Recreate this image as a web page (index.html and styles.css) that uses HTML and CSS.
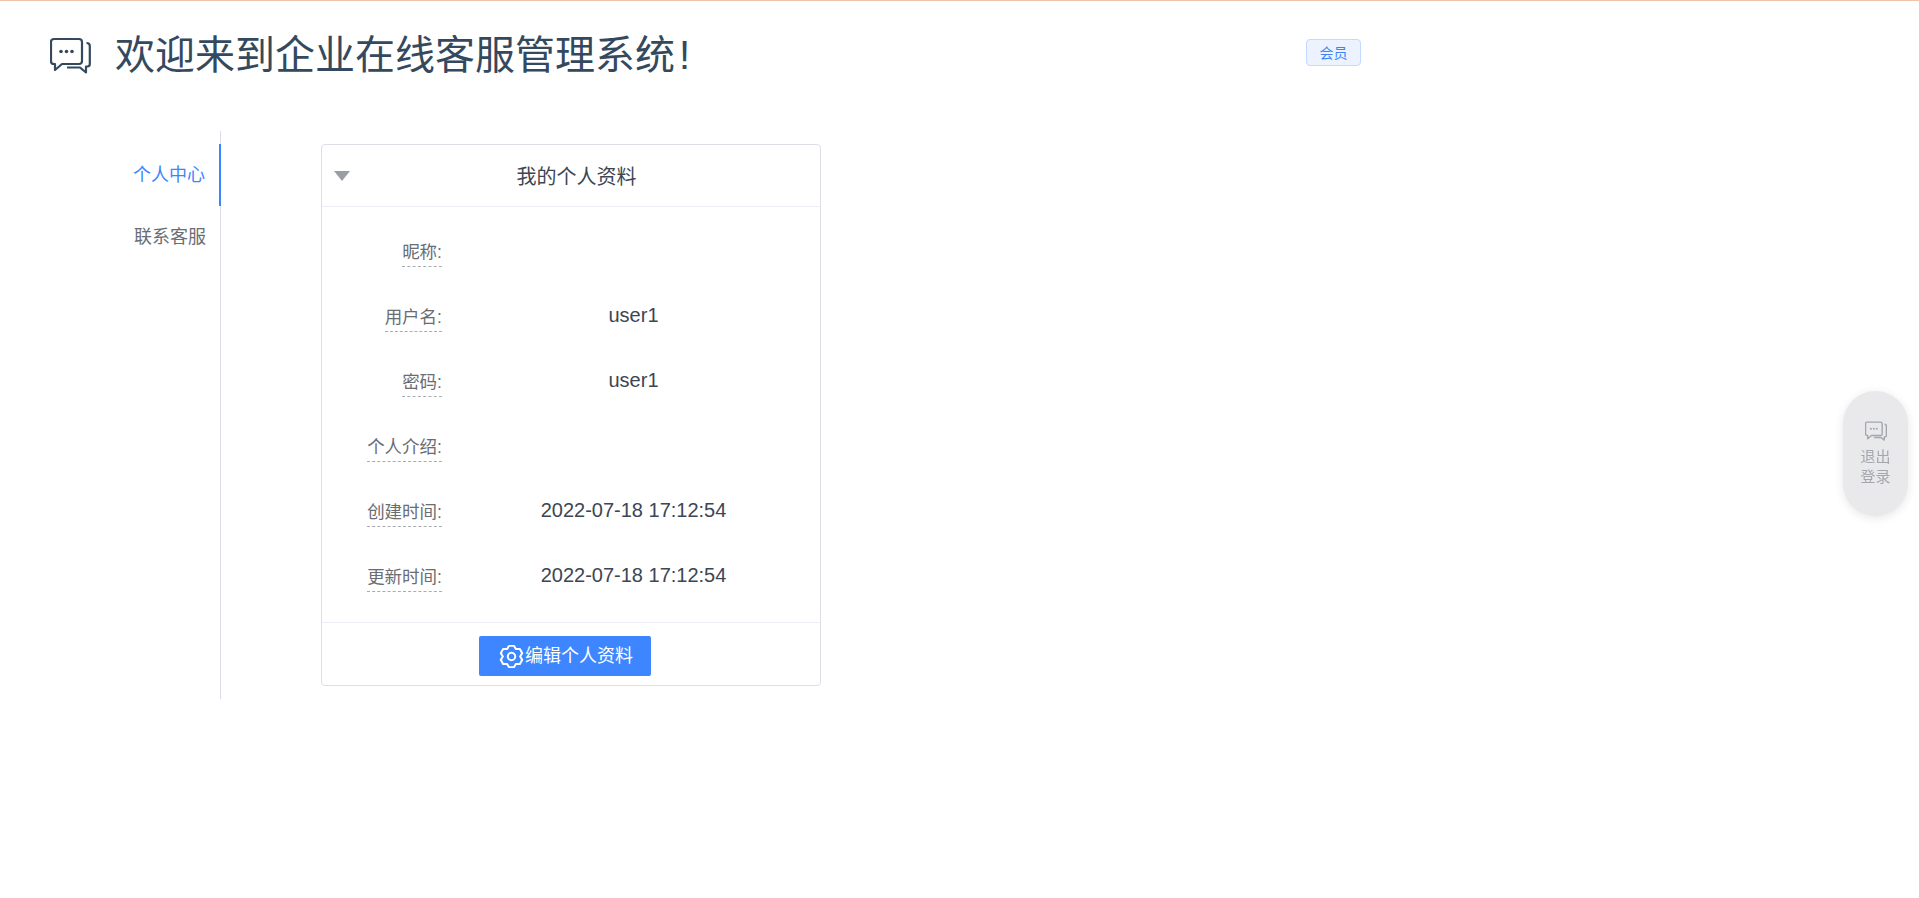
FILE: index.html
```html
<!DOCTYPE html>
<html lang="zh-CN">
<head>
<meta charset="utf-8">
<title>企业在线客服管理系统</title>
<link rel="stylesheet" href="styles.css">
</head>
<body>
<header class="top">
  <svg class="logo" viewBox="0 0 41 37" fill="none" stroke="currentColor" stroke-width="2.2" stroke-linejoin="round">
    <path d="M4 2H29a3 3 0 0 1 3 3V24a3 3 0 0 1-3 3H12L5 33V27H4a3 3 0 0 1-3-3V5a3 3 0 0 1 3-3z"/>
    <path d="M36.500 6c2 0 3.300 1 3.300 3V27a2.500 2.500 0 0 1-2.500 2.500H36V35.500L30 30.500H17"/>
    <circle cx="11" cy="14.500" r="1.800" fill="currentColor" stroke="none"/>
    <circle cx="16.500" cy="14.500" r="1.800" fill="currentColor" stroke="none"/>
    <circle cx="22" cy="14.500" r="1.800" fill="currentColor" stroke="none"/>
  </svg>
  <h1 class="title">欢迎来到企业在线客服管理系统<span class="bang">!</span></h1>
  <span class="badge">会员</span>
</header>
<main class="main">
  <nav class="tabs">
    <a class="tab active">个人中心</a>
    <a class="tab">联系客服</a>
  </nav>
  <section class="card">
    <div class="card-head">
      <span class="caret"></span>
      <span class="card-title">我的个人资料</span>
    </div>
    <div class="card-body">
      <div class="row"><span class="label"><span class="label-text">昵称:</span></span><span class="value"></span></div>
      <div class="row"><span class="label"><span class="label-text">用户名:</span></span><span class="value">user1</span></div>
      <div class="row"><span class="label"><span class="label-text">密码:</span></span><span class="value">user1</span></div>
      <div class="row"><span class="label"><span class="label-text">个人介绍:</span></span><span class="value"></span></div>
      <div class="row"><span class="label"><span class="label-text">创建时间:</span></span><span class="value">2022-07-18 17:12:54</span></div>
      <div class="row"><span class="label"><span class="label-text">更新时间:</span></span><span class="value">2022-07-18 17:12:54</span></div>
    </div>
    <div class="card-foot">
      <button class="btn" type="button">
        <svg class="gear" viewBox="0 0 24 24" fill="none" stroke="currentColor" stroke-width="1.900" stroke-linejoin="round">
          <path d="M9.530 1.800L14.470 1.800L16.150 4.810L20.040 4.700L22.300 8.780L20.300 12L22.300 15.220L20.040 19.300L16.150 19.190L14.470 22.200L9.530 22.200L7.850 19.190L3.960 19.300L1.700 15.220L3.700 12L1.700 8.780L3.960 4.700L7.850 4.810Z"/>
          <circle cx="12" cy="12" r="3.600"/>
        </svg><span class="btn-text">编辑个人资料</span>
      </button>
    </div>
  </section>
</main>
<aside class="float">
  <svg class="float-icon" viewBox="0 0 41 37" fill="none" stroke="currentColor" stroke-width="2.600" stroke-linejoin="round">
    <path d="M4 2H29a3 3 0 0 1 3 3V24a3 3 0 0 1-3 3H12L5 33V27H4a3 3 0 0 1-3-3V5a3 3 0 0 1 3-3z"/>
    <path d="M36.500 6c2 0 3.300 1 3.300 3V27a2.500 2.500 0 0 1-2.500 2.500H36V35.500L30 30.500H17"/>
    <circle cx="11" cy="14.500" r="1.900" fill="currentColor" stroke="none"/>
    <circle cx="16.500" cy="14.500" r="1.900" fill="currentColor" stroke="none"/>
    <circle cx="22" cy="14.500" r="1.900" fill="currentColor" stroke="none"/>
  </svg>
  <span class="float-text">退出<br>登录</span>
</aside>
</body>
</html>
```
FILE: styles.css
```css
* { box-sizing: border-box; }
html, body { margin: 0; padding: 0; height: 100%; overflow: hidden; }
body {
  background: #fff;
  color: #2c3e50;
  font-family: "Liberation Sans", "Noto Sans CJK SC", sans-serif;
  border-top: 1px solid #f0c4ab;
}
.top {
  display: flex;
  align-items: center;
  height: 130px;
  padding: 0 0 22px 50px;
}
.logo { width: 41px; height: 37px; color: #34495e; margin: 0 24px 0 0; }
.title {
  margin: 0;
  font-size: 40px;
  line-height: 60px;
  font-weight: 400;
  color: #34495e;
  width: 1191px;
}
.bang { margin-left: 4px; }
.badge {
  display: inline-flex;
  align-items: center;
  justify-content: center;
  width: 55px;
  height: 27px;
  margin-top: -6px;
  font-size: 14px;
  color: #3e84f5;
  background: #ecf3ff;
  border: 1px solid #c3d9ff;
  border-radius: 4px;
}
.main {
  display: flex;
  align-items: flex-start;
  padding-left: 100px;
}
.tabs {
  width: 121px;
  height: 568px;
  padding-top: 13px;
  border-right: 1px solid #dcdfe6;
  display: flex;
  flex-direction: column;
}
.tab {
  height: 62px;
  line-height: 62px;
  font-size: 18px;
  text-align: right;
  padding-right: 15px;
  margin-right: -1px;
  color: #6a6d73;
}
.tab.active {
  color: #3e84ff;
  border-right: 2px solid #3e84ff;
  padding-right: 14px;
}
.card {
  width: 500px;
  height: 542px;
  margin: 13px 0 0 100px;
  border: 1px solid #dcdfe6;
  border-radius: 4px;
  display: flex;
  flex-direction: column;
}
.card-head {
  position: relative;
  height: 62px;
  flex: none;
  display: flex;
  align-items: center;
  justify-content: center;
  border-bottom: 1px solid #ebeef5;
}
.caret {
  position: absolute;
  left: 12px;
  top: 26px;
  width: 0;
  height: 0;
  border-left: 8.500px solid transparent;
  border-right: 8.500px solid transparent;
  border-top: 10px solid #9a9da4;
}
.card-title { font-size: 20px; color: #3c4654; padding-left: 11px; }
.card-body {
  flex: 1;
  padding-top: 29px;
  display: flex;
  flex-direction: column;
  gap: 25px;
}
.row { display: flex; height: 40px; align-items: flex-start; }
.label {
  width: 120px;
  flex: none;
  padding-top: 3px;
  text-align: right;
  font-size: 17.500px;
}
.label-text {
  display: inline-block;
  padding-top: 0;
  line-height: 27px;
  color: #6a6d73;
  border-bottom: 1px dashed #a8abb2;
}
.value {
  flex: 1;
  padding: 1px 0 0 5px;
  text-align: center;
  font-size: 20px;
  line-height: 26px;
  color: #3c4654;
}
.card-foot {
  height: 63px;
  flex: none;
  border-top: 1px solid #ebeef5;
  display: flex;
  justify-content: center;
  padding: 13px 12px 0 0;
}
.btn {
  width: 172px;
  height: 40px;
  display: flex;
  align-items: center;
  justify-content: center;
  padding: 0 0 0 2px;
  font: inherit;
  font-size: 18px;
  color: #fff;
  background: #3e86ff;
  border: 0;
  border-radius: 2px;
}
.gear { width: 25px; height: 25px; margin-right: 1px; }
.btn-text { margin-top: -4px; }
.float {
  position: fixed;
  left: 1843px;
  top: 391px;
  width: 65px;
  height: 125px;
  border-radius: 33px;
  background: #e9e9eb;
  box-shadow: 0 2px 10px rgba(0,0,0,.1);
  display: flex;
  flex-direction: column;
  align-items: center;
  padding-top: 30px;
  color: #a3a6ad;
}
.float-icon { width: 22px; height: 20px; margin-bottom: 6px; }
.float-text { font-size: 15px; line-height: 20px; text-align: center; }
```
